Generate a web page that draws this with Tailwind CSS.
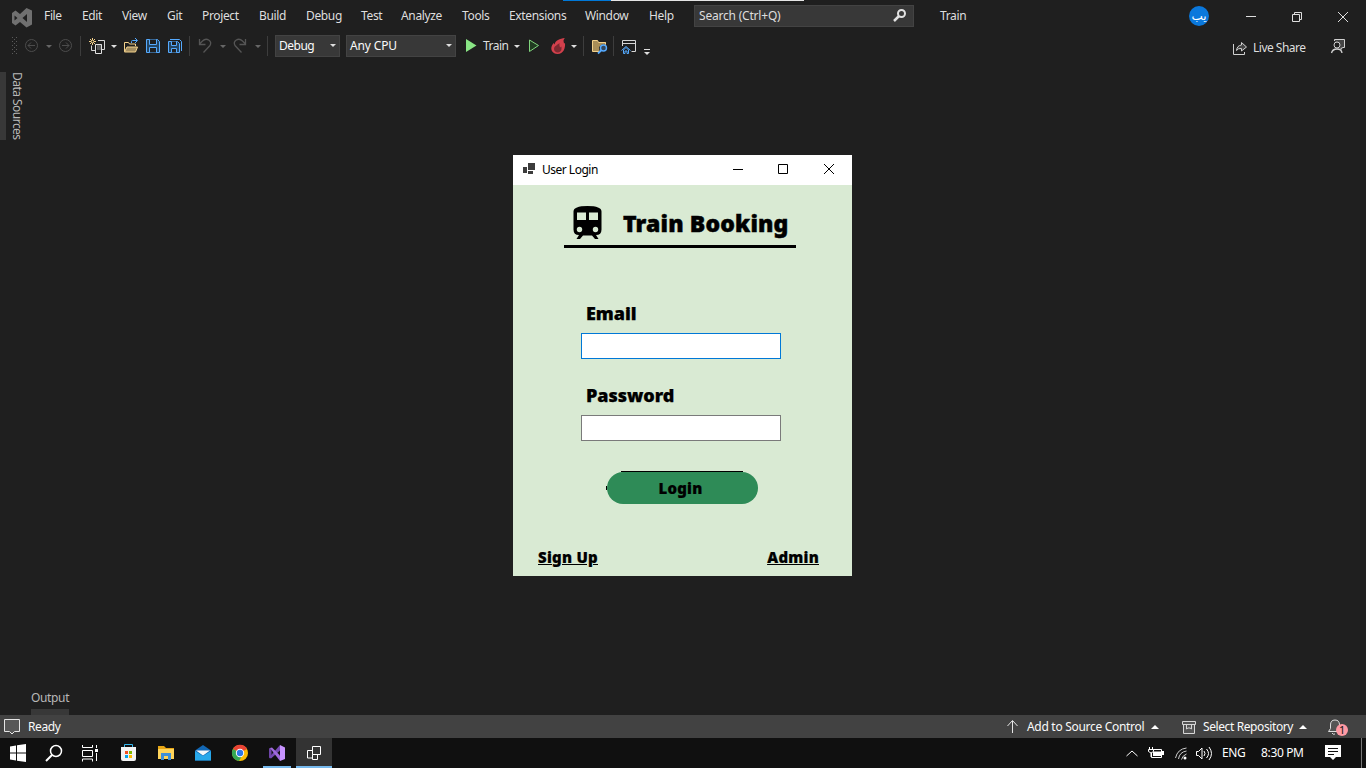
<!DOCTYPE html>
<html lang="en">
<head>
<meta charset="utf-8">
<title>Train - Visual Studio</title>
<script src="https://cdn.jsdelivr.net/npm/@tailwindcss/browser@4"></script>
</head>
<body class="relative flex h-[768px] w-[1366px] flex-col overflow-hidden bg-[#1f1f1f] font-['Noto_Sans',sans-serif] text-[12px] leading-[16px] tracking-[-0.35px] text-[#dedede]">

<!-- Title bar and menus -->
<header class="flex h-8 shrink-0 items-center whitespace-nowrap">
  <svg class="h-8 w-[44px] shrink-0" viewBox="0 0 44 32"><path fill="#707070" fill-rule="evenodd" d="M26.500 8l5.500 2.500v14L26.500 27.500 20 22l-4.500 3.500L12 23V13l3.500-2.500L20 14zM27 14l-4.500 4 4.500 4zM14.500 15.500v5l3-2.500z"/></svg>
  <nav class="flex shrink-0">
    <span class="w-[38px]">File</span><span class="w-[40px]">Edit</span><span class="w-[45px]">View</span><span class="w-[35px]">Git</span><span class="w-[57px]">Project</span><span class="w-[47px]">Build</span><span class="w-[55px]">Debug</span><span class="w-[40px]">Test</span><span class="w-[61px]">Analyze</span><span class="w-[47px]">Tools</span><span class="w-[76px]">Extensions</span><span class="w-[64px]">Window</span><span class="w-[45px]">Help</span>
  </nav>
  <div class="flex h-[22px] w-[220px] shrink-0 items-center justify-between border border-[#434343] bg-[#383838] pr-[5px] pl-1">
    <span class="tracking-[-0.2px]">Search (Ctrl+Q)</span>
    <svg class="h-4 w-4" viewBox="0 0 16 16" fill="none" stroke="#e2e2e2"><circle cx="9.500" cy="5.500" r="3.500" stroke-width="2"/><path d="M7 8l-5 5" stroke-width="2.500"/></svg>
  </div>
  <span class="ml-[26px]">Train</span>
  <div class="ml-auto flex shrink-0 items-center">
    <span class="mr-[36px] flex h-5 w-5 items-center justify-center rounded-full bg-[#0a78dc] pb-px font-['DejaVu_Sans',sans-serif] text-[12px] tracking-normal text-white">يب</span>
    <svg class="h-8 w-[121px]" viewBox="1245 0 121 32" fill="none" stroke="#dedede"><path d="M1246 16.500h10M1292.500 14.500h7v7h-7zM1294.500 14v-1.500h7v7h-2M1338 12l10 10M1348 12l-10 10"/></svg>
  </div>
</header>

<!-- Toolbar -->
<div class="flex h-7 shrink-0 items-center">
  <svg class="h-7 w-[82px] shrink-0" viewBox="0 32 82 28" fill="none" stroke="#4c4c4c">
    <path d="M12.500 37v17M16.500 37v17" stroke="#5a5a5a" stroke-dasharray="1 3"/><path d="M14.500 39v15" stroke="#5a5a5a" stroke-dasharray="1 3"/>
    <circle cx="31.500" cy="45.500" r="6"/><path d="M35 45.500h-7M31 42.500l-3 3 3 3"/><path d="M46 45h6l-3 3z" fill="#666" stroke="none"/>
    <circle cx="65.500" cy="45.500" r="6"/><path d="M62 45.500h7M66 42.500l3 3-3 3"/><path d="M80.500 36v20" stroke="#3d3d3d"/>
  </svg>
  <svg class="h-7 w-[38px] shrink-0" viewBox="82 32 38 28" fill="none">
    <path d="M98 40.500h6.500v9H102M91.500 45.500v5H95" stroke="#d6d6d6"/><path d="M97 44h5v6h-5z" fill="#555"/><path d="M95.500 44.500h6v9h-6z" stroke="#e0e0e0"/><path d="M92.500 38v7M89 41.500h7M90 39l5 5M95 39l-5 5" stroke="#f3d18b"/><circle cx="92.500" cy="41.500" r="1" fill="#1f1f1f"/><path d="M111 45h6l-3 3z" fill="#dedede"/>
  </svg>
  <svg class="h-7 w-[22px] shrink-0" viewBox="120 32 22 28" fill="none">
    <path d="M124.500 51.500v-9h4l1 1.500h6v2" stroke="#f3d18b"/><path d="M127 47h10.500l-2 5h-11z" fill="#a18c60" stroke="#f3d18b"/><path d="M131.500 43v-1.500q0-1 1-1h4.500M135 38l2.500 2.500L135 43" stroke="#55aaff"/>
  </svg>
  <svg class="h-7 w-[22px] shrink-0" viewBox="142 32 22 28" fill="none" stroke="#55aaff"><path d="M146.500 39.500h11l2 2v11h-13z" fill="#244562"/><path d="M149.500 39.500v5h7v-5M149.500 52.500v-5h7v5" fill="#1f1f1f"/></svg>
  <svg class="h-7 w-[26px] shrink-0" viewBox="164 32 26 28" fill="none" stroke="#55aaff"><path d="M168.500 41.500h9l2 2v9h-11z" fill="#244562"/><path d="M171.500 41.500v4h5v-4M171.500 52.500v-4h5v4" fill="#1f1f1f"/><path d="M170 39.500h9.500l2 2V51"/><path d="M189.500 36v20" stroke="#3d3d3d"/></svg>
  <svg class="h-7 w-[85px] shrink-0" viewBox="190 32 85 28" fill="none" stroke="#555"><path d="M199.500 39v5.500h6M199.500 44l3-3c4-4 10 0 7.500 4.500l-6.500 7" stroke-width="1.300"/><path d="M220 45h6l-3 3zM255 45h6l-3 3z" fill="#666" stroke="none"/><path d="M245.500 39v5.500h-6M245.500 44l-3-3c-4-4-10 0-7.500 4.500l6.500 7" stroke-width="1.300"/><path d="M267.500 36v20" stroke="#3d3d3d"/></svg>
  <div class="flex h-[22px] w-[65px] shrink-0 items-center justify-between border border-[#434343] bg-[#383838] px-[3px] tracking-[-0.5px] text-[#fafafa]">Debug<svg class="h-1 w-1.5" viewBox="0 0 6 4"><path d="M0 0h6L3 3z" fill="#dedede"/></svg></div>
  <div class="ml-1.5 flex h-[22px] w-[110px] shrink-0 items-center justify-between border border-[#434343] bg-[#383838] px-[3px] text-[#fafafa]"><span class="tracking-[-0.15px]">Any CPU</span><svg class="h-1 w-1.5" viewBox="0 0 6 4"><path d="M0 0h6L3 3z" fill="#dedede"/></svg></div>
  <svg class="h-7 w-[27px] shrink-0" viewBox="456 32 27 28"><path d="M466 39l10.500 6.500L466 52z" fill="#89e585"/></svg>
  <span class="w-[27px] shrink-0 tracking-[-0.5px]">Train</span>
  <svg class="h-7 w-[35px] shrink-0" viewBox="510 32 35 28"><path d="M514 45h6l-3 3z" fill="#dedede"/><path d="M529.500 40l9 5.500-9 6z" fill="#203b20" stroke="#80d47d"/></svg>
  <svg class="h-7 w-[43px] shrink-0" viewBox="545 32 43 28"><path d="M565 38c-2.500 2.500-1 3.500-1 5.500l1-.5c.5 5-1.500 11-7.500 11-5 0-7.500-4.500-5.500-8.500l1.500-2.500 1 1.500c1-4 5-6 10.500-6.500z" fill="#d3404c"/><path d="M559.500 43c-2 2-5.500 3-5.500 6 0 4.500 7.500 4.500 7.500 0v-2.500l-1.500 1q-1-2-.5-4.500z" fill="#7c2930"/><path d="M571 45h6l-3 3z" fill="#dedede"/><path d="M583.500 36v20" stroke="#3d3d3d"/></svg>
  <svg class="h-7 w-[28px] shrink-0" viewBox="588 32 28 28" fill="none"><path d="M592.500 51.500v-11h5l1 2h7v9z" fill="#a88d57" stroke="#f3d18b"/><path d="M597 54l2.500-3-.5-4 3-2.500h6v9z" fill="#1f1f1f"/><path d="M605.500 42.500v2" stroke="#f3d18b"/><circle cx="603.500" cy="48" r="3" fill="#344659" stroke="#55aaff" stroke-width="1.400"/><path d="M601.500 50l-3.500 3.500" stroke="#55aaff" stroke-width="1.800"/><path d="M613.500 36v20" stroke="#3d3d3d"/></svg>
  <svg class="h-7 w-[38px] shrink-0" viewBox="616 32 38 28" fill="none"><path d="M622.500 46v-5.500h13v11h-4M622.500 43.500h13" stroke="#d6d6d6"/><path d="M623.500 53.500V50l2.500-2.500 2.500 2.500v3.500h-1.500V51h-2v2.500zM621.500 50.500L626 46.500l4.500 4" stroke="#55aaff"/><path d="M644 49.500h6" stroke="#dedede"/><path d="M644 52h6l-3 3z" fill="#dedede"/></svg>
  <div class="ml-auto flex h-7 items-center">
    <svg class="h-7 w-[25px]" viewBox="1228 32 25 28" fill="none" stroke="#d0d0d0"><path d="M1233.500 44v10.500h11V52"/><path d="M1236.500 50.500q.5-5 5-5.500v-2.500l5 4.500-5 4v-2.500q-3.500-.5-5 2z" fill="#444"/></svg>
    <span class="w-[77px] pt-1 tracking-[-0.5px]">Live Share</span>
    <svg class="h-7 w-[36px]" viewBox="1330 32 36 28" fill="none" stroke="#d0d0d0"><path d="M1334.500 41v-1.500h10v8h-2l-1.500 2v-2" fill="#444"/><circle cx="1337" cy="45" r="3" fill="#1f1f1f"/><path d="M1331.500 53q1-4 5.500-4t5 4" stroke-width="1.300"/></svg>
  </div>
</div>

<!-- Work area with collapsed tool windows -->
<main class="flex grow flex-col justify-between">
  <div class="flex pt-3">
    <div class="h-[68px] w-1.5 bg-[#383838]"></div>
    <span class="ml-[3px] h-[68px] whitespace-nowrap text-[#b8b8b8] tracking-[-0.53px] [writing-mode:vertical-rl]">Data Sources</span>
  </div>
  <div class="ml-[31px] w-[38px] border-b-[6px] border-[#383838] pb-[3px] whitespace-nowrap text-[#b8b8b8] tracking-[-0.35px]">Output</div>
</main>

<!-- Status bar -->
<footer class="flex h-[23px] shrink-0 items-center bg-[#424242] whitespace-nowrap text-[#fafafa] tracking-[-0.4px]">
  <svg class="h-[23px] w-[28px]" viewBox="0 715 28 23"><path d="M4.500 719.500h15v12h-5l-2.500 2.500-2.500-2.500h-5z" fill="#575757" stroke="#e5e5e5"/></svg>
  <span>Ready</span>
  <svg class="ml-auto h-[23px] w-[22px]" viewBox="1004 715 22 23" fill="none" stroke="#e5e5e5"><path d="M1012.500 733v-12M1007.500 726l5-5.500 5 5.500"/></svg>
  <span class="w-[124px] pl-px tracking-[-0.3px]">Add to Source Control</span>
  <svg class="h-[23px] w-[53px]" viewBox="1150 715 53 23" fill="none" stroke="#d6d6d6"><path d="M1151 729h8l-4-4z" fill="#fff" stroke="none"/><path d="M1182.500 721.500h13v3h-13zM1183.500 724.500v9h11v-9M1186.500 725v4l1.500-1h2l1.500 1v-4" fill="#555"/></svg>
  <span class="w-[95px]">Select Repository</span>
  <svg class="h-[23px] w-[68px]" viewBox="1298 715 68 23"><path d="M1299 729h8l-4-4z" fill="#fff"/><path d="M1328.500 731.500l2-3V725q0-5 4.500-5t4.500 5v3.500l2 3zM1332 733q1 2 3 1" fill="#555" stroke="#ddd"/><circle cx="1342" cy="730" r="6" fill="#ff99a4"/><text x="1342" y="734" text-anchor="middle" font-size="11" fill="#111">1</text></svg>
</footer>

<!-- Taskbar -->
<div class="flex h-[30px] shrink-0 items-center bg-[#101010] whitespace-nowrap text-white">
  <svg class="h-[30px] w-[36px]" viewBox="0 738 36 30"><path d="M10 746.500l6-1v7h-6zM17 745.300l9-1.300v8.500h-9zM10 753.500h6v7l-6-1zM17 753.500h9v8.500l-9-1.300z" fill="#fff"/></svg>
  <svg class="h-[30px] w-[36px]" viewBox="36 738 36 30" fill="none" stroke="#fff" stroke-width="1.500"><circle cx="56" cy="751" r="5.500"/><path d="M52 755l-6 6" stroke-width="2"/></svg>
  <svg class="h-[30px] w-[38px]" viewBox="72 738 38 30" fill="none" stroke="#fff"><path d="M82.500 745v2.500h10V745M82.500 750.500h10v6h-10zM82.500 761.500v-2.500h10v2.500M96.500 745v3M96.500 753v8"/><path d="M95 749h3v3h-3z" fill="#fff" stroke="none"/></svg>
  <svg class="h-[30px] w-[37px]" viewBox="110 738 37 30"><path d="M124.500 748v-3.500h8v3.500" fill="none" stroke="#35b8ee"/><path d="M121 747h15v12q0 2-2 2h-11q-2 0-2-2z" fill="#f3f3f3"/><path d="M125 751h3v3h-3z" fill="#f25022"/><path d="M129 751h3v3h-3z" fill="#7fba00"/><path d="M125 755h3v3h-3z" fill="#00a4ef"/><path d="M129 755h3v3h-3z" fill="#ffb900"/></svg>
  <svg class="h-[30px] w-[37px]" viewBox="147 738 37 30"><path d="M158 746h6l2 2h8v11h-16z" fill="#e7a514"/><path d="M158 749h16v10h-16z" fill="#ffd45a"/><path d="M161 760v-7h10v7h-3v-4h-4v4z" fill="#3f8fd8"/></svg>
  <svg class="h-[30px] w-[37px]" viewBox="184 738 37 30"><path d="M195 750.500l8-5.500 8 5.500v10h-16z" fill="#1267b4"/><path d="M195 751l8 5 8-5v9.500h-16z" fill="#28a8ea"/><path d="M196 750.500h14l-7 5z" fill="#f4f8fa"/></svg>
  <svg class="h-[30px] w-[42px]" viewBox="221 738 42 30"><circle cx="240" cy="753" r="8" fill="#fbbc05"/><path d="M240 753l-7-4a8 8 0 0 1 14 0z" fill="#ea4335"/><path d="M240 753l-7-4a8 8 0 0 0 6 12l4-7z" fill="#34a853"/><circle cx="240" cy="753" r="4.200" fill="#fff"/><circle cx="240" cy="753" r="3.200" fill="#2d78e8"/></svg>
  <svg class="h-[30px] w-[33px]" viewBox="263 738 33 30"><path d="M280 745l5 2.500v11.500l-5 2z" fill="#c793ff"/><path d="M270 748l1.500.5v9l-1.500 1-1-1v-9z" fill="#6e45a8"/><path d="M280 745v5.500l-9 8-1.500-1.500z" fill="#7549b2"/><path d="M270 748l2-.5 8 8v5.500z" fill="#a06bdc"/><path d="M263 766h28v2h-28z" fill="#76b9ed"/></svg>
  <svg class="h-[30px] w-[36px] bg-[#333]" viewBox="296 738 36 30" fill="none" stroke="#fff"><path d="M312.500 746.500h8v8h-8zM312 750.500h-4.500v7.500h5M312.500 754.500v5h5v-5"/><path d="M296 767h36" stroke="#76b9ed" stroke-width="2"/></svg>
  <svg class="ml-auto h-[30px] w-[102px]" viewBox="1120 738 102 30" fill="none" stroke="#fff"><path d="M1126.500 756l5.500-5 5.500 5M1151.500 749.500h10v8h-10z"/><path d="M1163 751v4" stroke-width="2"/><path d="M1153 751.500h8v4.500h-8z" fill="#fff" stroke="none"/><path d="M1149.500 747v2M1152.500 747v2M1148.500 749.500h5v2q-2.500 3-5 0zM1151 753v4" fill="#101010"/><path d="M1175.500 758q2-9 11-10M1178.500 759q1-7 8-8M1181.500 759.500q1-4 5-5.500" stroke="#ccc"/><circle cx="1185" cy="758" r="1.500" fill="#fff" stroke="none"/><path d="M1196.500 751.500h2l3.500-3.500v11l-3.500-3.500h-2zM1204 751q2 2.500 0 5M1206.500 749q4 4.500 0 9M1209 747q5 6.500 0 13"/></svg>
  <span class="w-[39px]">ENG</span>
  <span class="w-[56px]">8:30 PM</span>
  <svg class="h-[30px] w-[49px]" viewBox="1317 738 49 30"><path d="M1325 745h16v12h-5l-3 3-3-3h-5z" fill="#fff"/><path d="M1328 748.500h10M1328 751.500h10M1328 754.500h6" stroke="#111"/><path d="M1361.500 738v30" stroke="#777"/></svg>
</div>

<!-- Loading strip at the top edge -->
<div class="absolute top-0 left-[563px] flex h-px w-[241px] bg-[#e5e5e5]"><div class="w-12 bg-[#0078d7]"></div></div>

<!-- Login window -->
<section class="absolute top-[155px] left-[513px] flex h-[421px] w-[339px] flex-col bg-[#d9ead3] text-black">
  <div class="flex h-[30px] shrink-0 items-center bg-white">
    <svg class="h-[30px] w-[29px]" viewBox="513 155 29 30" fill="#3c3c3c"><path d="M528 163h7v7h-7zM523 167h4v6h-4zM528 171h5v3h-5z"/></svg>
    <span class="tracking-[-0.5px]">User Login</span>
    <svg class="ml-auto h-[30px] w-[122px]" viewBox="730 155 122 30" fill="none" stroke="#000"><path d="M733 169.500h10M778.500 164.500h9v9h-9zM824 164l10 10M834 164l-10 10"/></svg>
  </div>
  <div class="ml-[51px] flex h-[63px] w-[232px] items-center border-b-[3px] border-black">
    <svg class="h-[60px] w-[59px]" viewBox="564 185 59 60"><path d="M573.500 211.500q0-5.500 14-5.500t14 5.500v18q0 5.500-5.500 5.500l2.500 4h-3.500l-3-3.500h-9l-3 3.500h-3.500l2.500-4q-5.500 0-5.500-5.500z" fill="#000"/><path d="M577 212.500h9v7.500h-9zM589 212.500h9v7.500h-9z" fill="#d9ead3"/><circle cx="579.500" cy="229.500" r="2.700" fill="#d9ead3"/><circle cx="595.500" cy="229.500" r="2.700" fill="#d9ead3"/></svg>
    <h1 class="pt-[15px] text-[23px] leading-8 font-black tracking-[0.15px] whitespace-nowrap [-webkit-text-stroke:0.5px_black]">Train Booking</h1>
  </div>
  <form class="flex flex-col pt-[53px] pl-[68px] text-[18px] leading-6 font-black tracking-[-0.05px]">
    <label for="email" class="pl-[5px] [-webkit-text-stroke:0.25px_black]">Email</label>
    <input id="email" class="mt-2 h-[26px] w-[200px] border border-[#0078d7] bg-white">
    <label for="password" class="mt-6 pl-[5px] [-webkit-text-stroke:0.25px_black]">Password</label>
    <input id="password" type="password" class="mt-2 h-[26px] w-[200px] border border-[#7a7a7a] bg-white">
    <div class="relative mt-[30px] ml-[25px] h-[33px] w-[152px]">
      <div class="absolute top-0 left-[15px] h-px w-[122px] bg-black"></div>
      <div class="absolute top-[15px] left-0 h-1 w-px bg-black"></div>
      <button type="button" class="absolute top-px left-px h-8 w-[151px] rounded-full bg-[#2e8b57] pr-1 text-[15px] leading-5 font-black tracking-[0.25px] [-webkit-text-stroke:0.2px_black]">Login</button>
    </div>
  </form>
  <div class="mt-[43px] flex justify-between pr-[33px] pl-[25px] text-[15px] leading-5 font-black tracking-[0.25px] underline [-webkit-text-stroke:0.2px_black]"><a>Sign Up</a><a>Admin</a></div>
</section>
</body>
</html>
